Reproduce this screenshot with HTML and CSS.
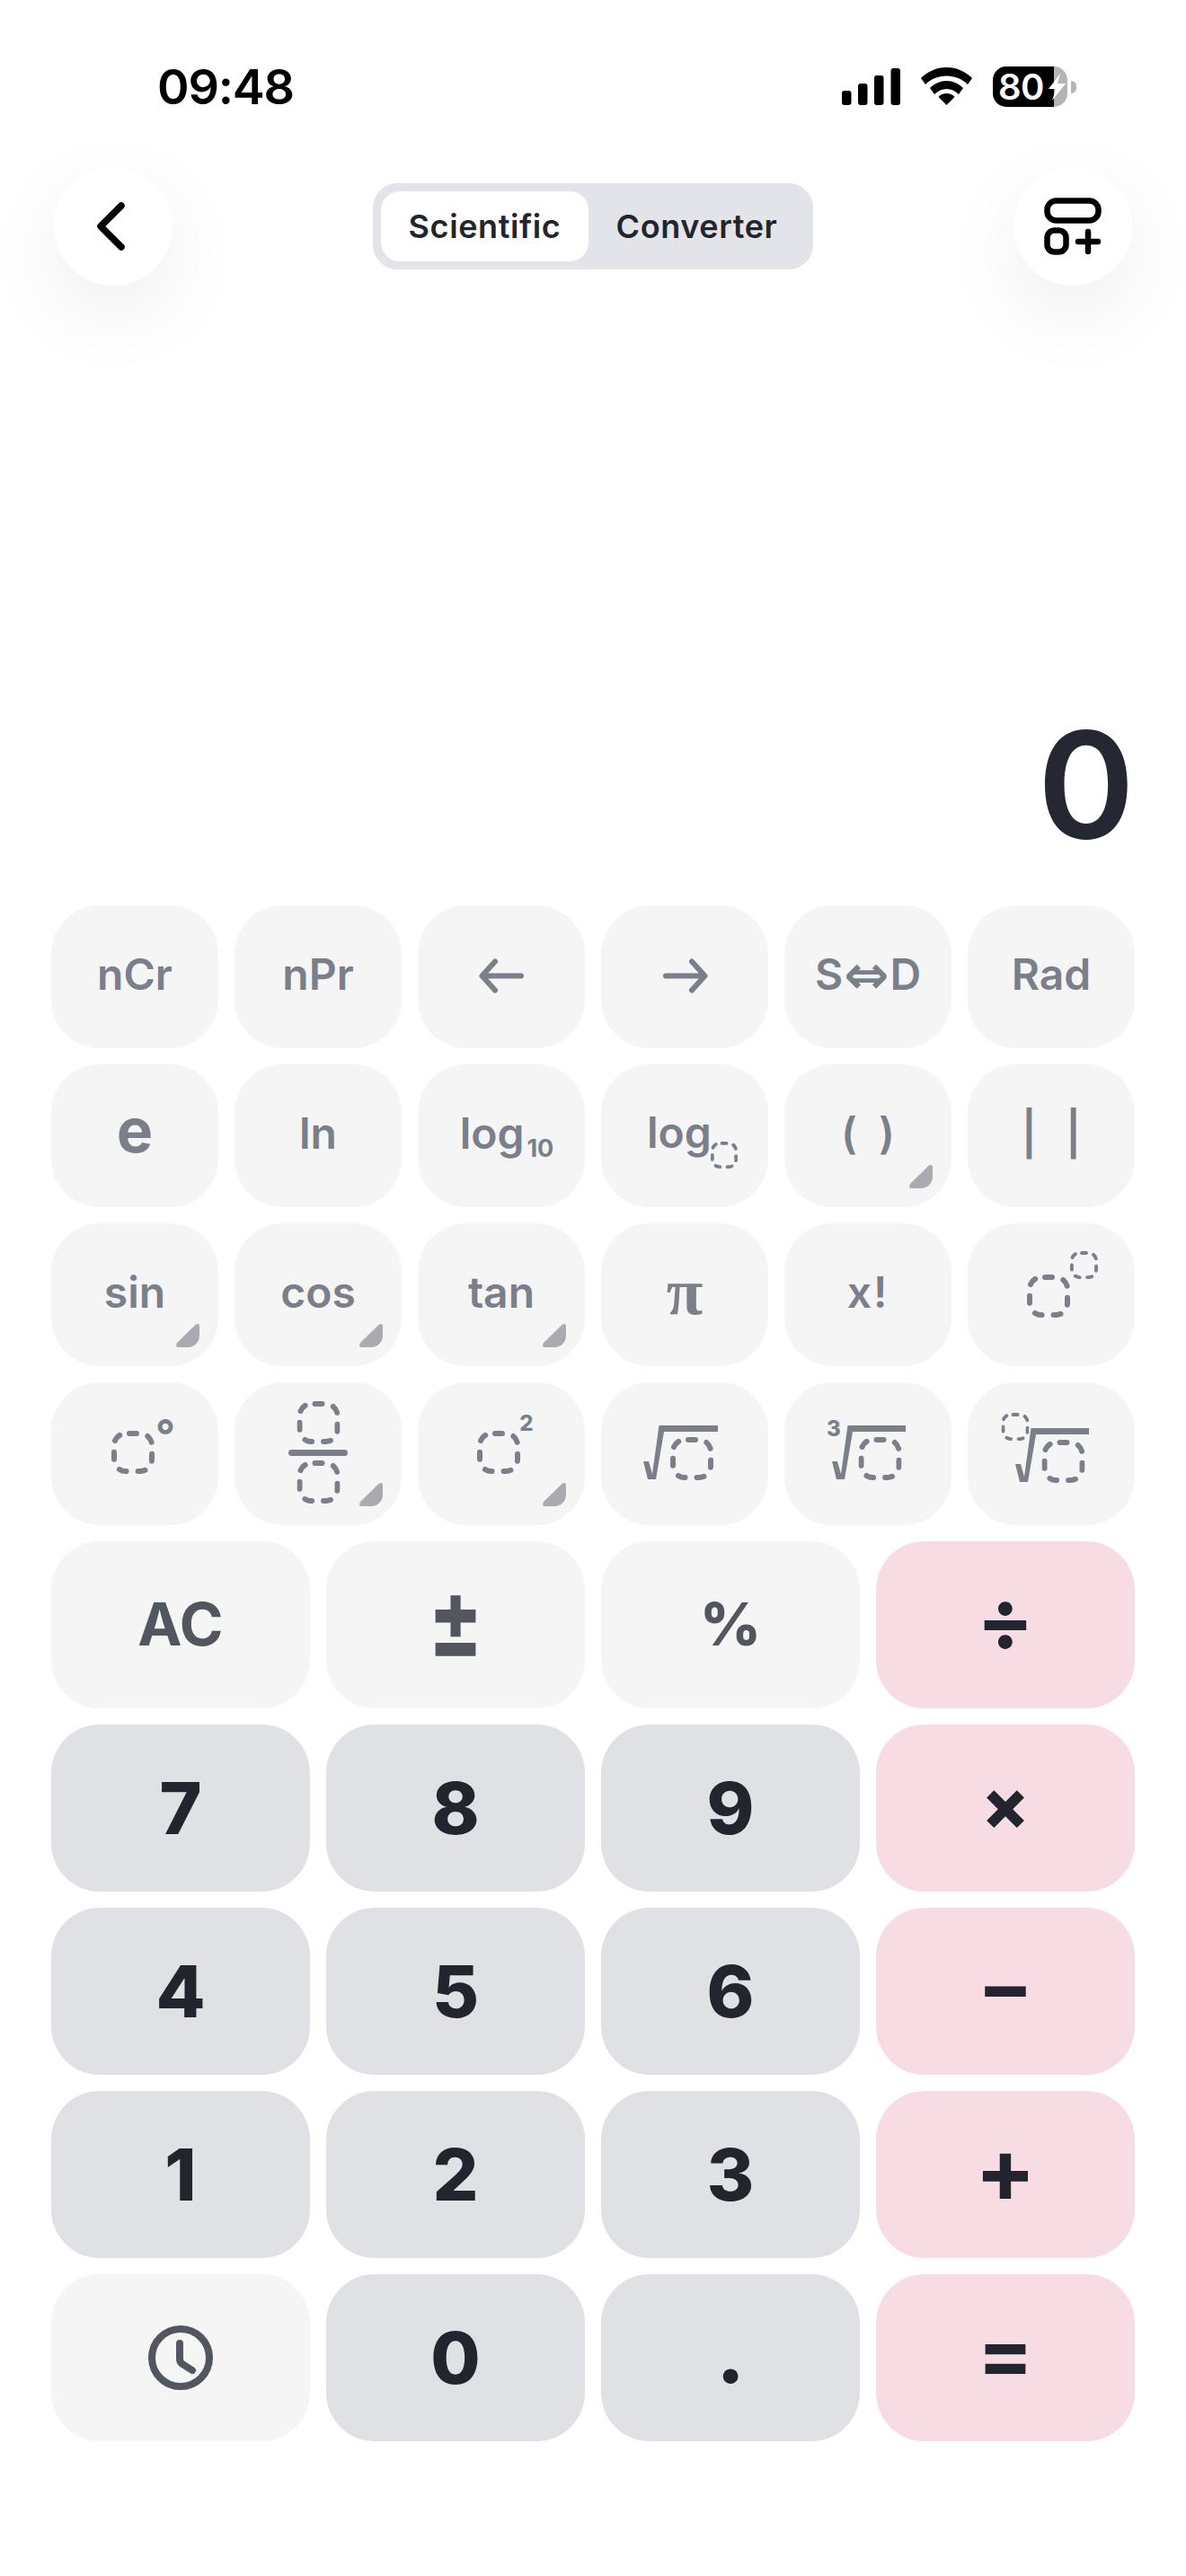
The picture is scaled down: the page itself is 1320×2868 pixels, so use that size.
FILE: index.html
```html
<!DOCTYPE html>
<html lang="en">
<head>
<meta charset="utf-8">
<title>Calculator</title>
<link rel="stylesheet" href="styles.css">
</head>
<body>
<svg class="defs" width="0" height="0" aria-hidden="true">
  <defs>
    <symbol id="box" viewBox="0 0 48 48">
      <rect class="dash" x="3" y="3" width="42" height="42" rx="13"/>
    </symbol>
    <symbol id="fold" viewBox="0 0 26 26">
      <path d="M1 21 L21.500 1 Q26 -1.500 26 3 V13 A13 13 0 0 1 13 26 H3 Q-1.500 26 1 21 Z"/>
    </symbol>
  </defs>
</svg>
<main class="app">
  <div class="status">
    <span class="time">09:48</span>
    <div class="status-icons">
      <svg class="signal" viewBox="0 0 65 41"><rect x="0" y="25" width="10.500" height="16" rx="3"/><rect x="18" y="17" width="10.500" height="24" rx="3"/><rect x="36" y="8" width="10.500" height="33" rx="3"/><rect x="54.500" y="0" width="10.500" height="41" rx="3"/></svg>
      <svg class="wifi" viewBox="0 0 57 42"><path d="M28.500 0C17.500 0 7.500 4.500 0 12L5 19C11 13 19.500 9.500 28.500 9.500S46 13 52 19L57 12C49.500 4.500 39.500 0 28.500 0Z"/><path d="M28.500 15C21.500 15 15 18 10 23L15 30C19 26 23.500 24 28.500 24S38 26 42 30L47 23C42 18 35.500 15 28.500 15Z"/><path d="M28.500 29C25 29 21.500 30.500 19.500 33L28.500 42L37.500 33C35.500 30.500 32 29 28.500 29Z"/></svg>
      <div class="battery-wrap">
        <div class="battery"><span class="pct">80</span>
          <svg class="bolt" viewBox="0 0 19 30"><path d="M13 0 L0 17 H8 L4 30 L19 11 H10 Z"/></svg>
        </div>
        <span class="nub"></span>
      </div>
    </div>
  </div>

  <header class="bar">
    <button class="round">
      <svg class="round-icon" viewBox="0 0 132 132"><path class="ic" d="M75 43 L52 66 L75 89"/></svg>
    </button>
    <div class="seg">
      <span class="seg-item seg-on">Scientific</span>
      <span class="seg-item">Converter</span>
    </div>
    <button class="round">
      <svg class="round-icon" viewBox="0 0 132 132"><g class="ic-thin"><rect x="37.500" y="37.500" width="57" height="22" rx="10"/><rect x="37.500" y="70.500" width="21" height="24" rx="8"/><path d="M72 83 H94 M83 72 V94"/></g></svg>
    </button>
  </header>

  <section class="display"><span class="result">0</span></section>

  <section class="pad">
    <div class="sci">
      <div class="k s">nCr</div>
      <div class="k s">nPr</div>
      <div class="k s art"><svg viewBox="0 0 186 159"><path class="ln" d="M115 78.500 H72 M86 62.500 L71.500 78.500 L86 94.500"/></svg></div>
      <div class="k s art"><svg viewBox="0 0 186 159"><path class="ln" d="M72 78.500 H115 M101 62.500 L115.500 78.500 L101 94.500"/></svg></div>
      <div class="k s sd">S<span class="iff">⇔</span>D</div>
      <div class="k s">Rad</div>

      <div class="k s e">e</div>
      <div class="k s">ln</div>
      <div class="k s"><span class="log10">log<sub class="sub">10</sub></span></div>
      <div class="k s art"><svg viewBox="0 0 186 159"><text class="t48" x="51" y="93">log</text><use href="#box" x="122" y="86" width="30" height="30"/></svg></div>
      <div class="k s paren">(&ensp;)<svg class="fold"><use href="#fold"/></svg></div>
      <div class="k s abs">|&ensp;&#8201;|</div>

      <div class="k s">sin<svg class="fold"><use href="#fold"/></svg></div>
      <div class="k s">cos<svg class="fold"><use href="#fold"/></svg></div>
      <div class="k s">tan<svg class="fold"><use href="#fold"/></svg></div>
      <div class="k s pi">π</div>
      <div class="k s fact">x!</div>
      <div class="k s art"><svg viewBox="0 0 186 159"><use href="#box" x="66" y="57" width="48" height="48"/><use href="#box" x="114" y="31" width="31" height="31"/></svg></div>

      <div class="k s art"><svg viewBox="0 0 186 159"><use href="#box" x="67" y="54" width="48" height="48"/><text class="tdeg" x="127" y="76" text-anchor="middle">°</text></svg></div>
      <div class="k s art"><svg viewBox="0 0 186 159"><use href="#box" x="69.500" y="21" width="48" height="48"/><rect class="fill" x="60" y="75" width="66" height="7" rx="3.500"/><use href="#box" x="69.500" y="87" width="48" height="48"/></svg><svg class="fold"><use href="#fold"/></svg></div>
      <div class="k s art"><svg viewBox="0 0 186 159"><use href="#box" x="66" y="54" width="48" height="48"/><text class="tsup" x="121" y="54" text-anchor="middle">2</text></svg><svg class="fold"><use href="#fold"/></svg></div>
      <div class="k s art"><svg viewBox="0 0 186 159"><polygon class="fill" points="47,88 53,88 57,102 64.500,48 130,48 130,55 70,55 61,108 52,108"/><use href="#box" x="77" y="61" width="48" height="48"/></svg></div>
      <div class="k s art"><svg viewBox="0 0 186 159"><polygon class="fill" points="53,88 59,88 63,102 70.500,48 135,48 135,55 76,55 67,108 58,108"/><use href="#box" x="82.500" y="61" width="48" height="48"/><text class="tsup" x="55" y="60" text-anchor="middle">3</text></svg></div>
      <div class="k s art"><svg viewBox="0 0 186 159"><polygon class="fill" points="53,91 59,91 63,105 70.500,51 135,51 135,58 76,58 67,111 58,111"/><use href="#box" x="82.500" y="64" width="48" height="48"/><use href="#box" x="37.500" y="34" width="31" height="31"/></svg></div>
    </div>

    <div class="main">
      <div class="k m ac">AC</div>
      <div class="k m pm"><span class="pm-glyph">±</span></div>
      <div class="k m pct-key">%</div>
      <div class="k p op div">÷</div>

      <div class="k d">7</div>
      <div class="k d">8</div>
      <div class="k d">9</div>
      <div class="k p op mul">×</div>

      <div class="k d">4</div>
      <div class="k d">5</div>
      <div class="k d">6</div>
      <div class="k p op sub-op">−</div>

      <div class="k d">1</div>
      <div class="k d">2</div>
      <div class="k d">3</div>
      <div class="k p op add">+</div>

      <div class="k m"><svg class="clock" viewBox="0 0 72 72"><circle cx="36" cy="36" r="32"/><path d="M35 20 V37 Q35 41 38 43 L49 50"/></svg></div>
      <div class="k d">0</div>
      <div class="k d dot">.</div>
      <div class="k p op eq">=</div>
    </div>
  </section>
</main>
</body>
</html>
```
FILE: styles.css
```css
* { box-sizing: border-box; }
html, body { margin: 0; padding: 0; background: #fff; }
body { font-family: "Inter", "Liberation Sans", sans-serif; color: #22252d; }
.defs { position: absolute; }
.app { width: 1320px; height: 2868px; display: flex; flex-direction: column; overflow: hidden; }

.status { height: 186px; padding: 75px 122px 0 175px; display: flex; justify-content: space-between; align-items: flex-start; }
.time { font-size: 54px; font-weight: 600; line-height: 44px; color: #000; letter-spacing: -1.200px; }
.status-icons { display: flex; align-items: flex-start; margin-top: -1px; }
.signal { width: 65px; height: 41px; margin-top: 2px; }
.wifi { width: 57px; height: 42px; margin-left: 23px; margin-top: 1px; }
.battery-wrap { display: flex; align-items: center; margin-left: 23px; }
.battery { width: 83px; height: 45px; border-radius: 15px; background: linear-gradient(90deg, #000 0 68px, #b4b4b4 68px 100%); position: relative; padding-left: 6px; display: flex; align-items: center; color: #fff; }
.pct { font-size: 40px; font-weight: 600; line-height: 45px; letter-spacing: -.5px; }
.bolt { position: absolute; left: 62px; top: 8px; width: 19px; height: 30px; fill: #fff; }
.nub { width: 6px; height: 14px; margin-left: 4px; border-radius: 0 6px 6px 0; background: #b4b4b4; }

.bar { height: 132px; padding: 0 60px; display: flex; justify-content: space-between; align-items: center; }
.round { width: 132px; height: 132px; padding: 0; border: 0; border-radius: 50%; background: #fff; box-shadow: 0 30px 90px rgba(0,0,0,.07); }
.round-icon { display: block; width: 132px; height: 132px; }
.ic { fill: none; stroke: #000; stroke-width: 7.500; stroke-linecap: round; stroke-linejoin: round; }
.ic-thin { fill: none; stroke: #000; stroke-width: 6.500; stroke-linecap: round; stroke-linejoin: round; }
.seg { width: 490px; height: 96px; padding: 9px; border-radius: 27px; background: #e3e4e9; display: flex; }
.seg-item { font-size: 36px; font-weight: 600; letter-spacing: .6px; display: flex; align-items: center; justify-content: center; height: 78px; flex: 1 1 0; color: #22252d; }
.seg-on { flex: 0 0 231px; background: #fff; border-radius: 21px; }

.display { flex: 1 1 auto; display: flex; justify-content: flex-end; align-items: flex-end; padding: 0 57px 52px 0; }
.result { font-size: 164px; font-weight: 600; line-height: 1; color: #252833; }

.pad { padding: 0 57px 150px; display: flex; flex-direction: column; gap: 18px; }
.sci { display: grid; grid-template-columns: repeat(6, 186px); grid-auto-rows: 159px; gap: 18px; }
.main { display: grid; grid-template-columns: repeat(4, 288px); grid-auto-rows: 186px; gap: 18px; }

.k { position: relative; display: flex; align-items: center; justify-content: center; border-radius: 54px; line-height: 1; }
.s { background: #f5f5f6; color: #7a7f8a; font-size: 48px; font-weight: 600; padding-bottom: 5px; }
.art { padding: 0; }
.art > svg:first-child { display: block; width: 186px; height: 159px; }
.e { font-size: 68px; font-weight: 700; padding-bottom: 14px; }
.log10 { margin-left: 12px; }
.sub { font-size: 27px; font-weight: 700; line-height: 0; vertical-align: -9px; margin-left: 3px; }
.sd { letter-spacing: 0; }
.iff { font-family: "DejaVu Sans", sans-serif; font-weight: 700; font-size: 60px; margin: 0 1px; }
.fact { letter-spacing: 2px; }
.pi { font-family: "Liberation Serif", serif; font-weight: 700; font-size: 74px; padding-bottom: 8px; }
.m { background: #f5f5f6; color: #52565f; font-size: 66px; font-weight: 700; }
.ac { padding-bottom: 3px; }
.pm { font-size: 90px; font-weight: 700; padding-bottom: 14px; }
.pm-glyph { display: block; transform: scaleY(1.400); }
.pct-key { font-size: 66px; font-weight: 800; padding-bottom: 2px; }
.d { background: #e0e1e5; color: #22252d; font-size: 80px; font-weight: 800; }
.dot { font-size: 90px; padding-bottom: 8px; }
.p { background: #f8dce4; color: #22252d; }
.op { font-weight: 700; padding-bottom: 12px; }
.div { font-size: 94px; }
.mul { font-size: 78px; padding-bottom: 8px; font-weight: 800; }
.sub-op { font-size: 92px; }
.add { font-size: 100px; padding-bottom: 10px; }
.eq { font-size: 92px; padding-bottom: 10px; }

.dash { fill: none; stroke: #7a7f8a; stroke-width: 6; stroke-linecap: round; stroke-dasharray: 8 13; stroke-dashoffset: -4; }
.fill { fill: #7a7f8a; }
.ln { fill: none; stroke: #7a7f8a; stroke-width: 6; stroke-linecap: round; stroke-linejoin: round; }
.t48 { font-size: 48px; font-weight: 600; fill: #7a7f8a; }
.tsup { font-size: 24px; font-weight: 800; fill: #7a7f8a; }
.tdeg { font-size: 48px; font-weight: 700; fill: #7a7f8a; }
.fold { position: absolute; left: 139px; top: 112px; width: 26px; height: 26px; fill: #a9abb0; }
.clock { width: 72px; height: 72px; fill: none; stroke: #52565f; stroke-width: 8; stroke-linecap: round; }
```
